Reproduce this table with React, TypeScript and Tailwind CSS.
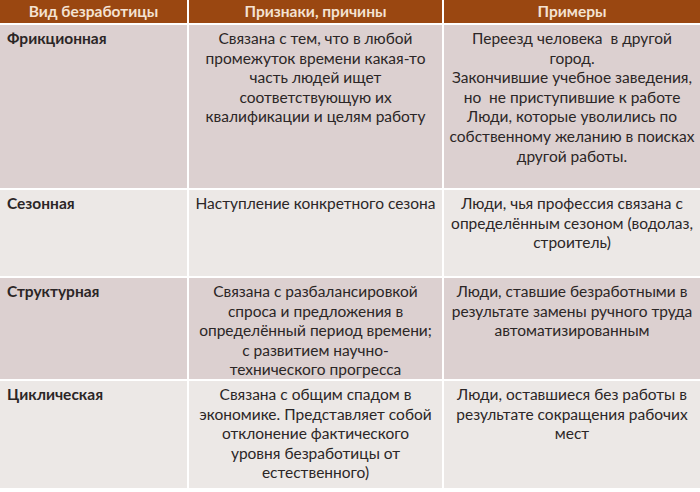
import React from 'react';

type Row = {
  kind: string;
  signs: string[];
  examples: string[];
  h: string;
  bg: string;
};

const rows: Row[] = [
  {
    kind: 'Фрикционная',
    signs: [
      'Связана с тем, что в любой',
      'промежуток времени какая-то',
      'часть людей ищет',
      'соответствующую их',
      'квалификации и целям работу',
    ],
    examples: [
      'Переезд человека  в другой',
      'город.',
      'Закончившие учебное заведения,',
      'но  не приступившие к работе',
      'Люди, которые уволились по',
      'собственному желанию в поисках',
      'другой работы.',
    ],
    h: 'h-[163px]',
    bg: 'bg-[#dcd0d0]',
  },
  {
    kind: 'Сезонная',
    signs: ['Наступление конкретного сезона'],
    examples: [
      'Люди, чья профессия связана с',
      'определённым сезоном (водолаз,',
      'строитель)',
    ],
    h: 'h-[86px]',
    bg: 'bg-[#ece8e6]',
  },
  {
    kind: 'Структурная',
    signs: [
      'Связана с разбалансировкой',
      'спроса и предложения в',
      'определённый период времени;',
      'с развитием научно-',
      'технического прогресса',
    ],
    examples: [
      'Люди, ставшие безработными в',
      'результате замены ручного труда',
      'автоматизированным',
    ],
    h: 'h-[101px]',
    bg: 'bg-[#dcd0d0]',
  },
  {
    kind: 'Циклическая',
    signs: [
      'Связана с общим спадом в',
      'экономике. Представляет собой',
      'отклонение фактического',
      'уровня безработицы от',
      'естественного)',
    ],
    examples: [
      'Люди, оставшиеся без работы в',
      'результате сокращения рабочих',
      'мест',
    ],
    h: 'h-[107px]',
    bg: 'bg-[#ece8e6]',
  },
];

const Lines = ({ items }: { items: string[] }) => (
  <>
    {items.map((t, i) => (
      <div key={i} className="whitespace-pre">
        {t}
      </div>
    ))}
  </>
);

export default function App() {
  return (
    <div
      className="w-[700px] h-[492px] bg-white text-[15.5px] leading-[19.6px] text-[#2b2626]"
      style={{ fontFamily: 'Lato, "Liberation Sans", sans-serif' }}
    >
      <div className="grid grid-cols-[187px_253px_1fr] gap-[2px] bg-white pb-[2px]">
        <div className="h-[23px] bg-[#9a4711] flex items-center justify-center font-bold text-[#f4e2d2]">
          Вид безработицы
        </div>
        <div className="h-[23px] bg-[#9a4711] flex items-center justify-center font-bold text-[#f4e2d2]">
          Признаки, причины
        </div>
        <div className="h-[23px] bg-[#9a4711] flex items-center justify-center font-bold text-[#f4e2d2]">
          Примеры
        </div>
        {rows.map((r) => (
          <React.Fragment key={r.kind}>
            <div className={`${r.h} ${r.bg} pl-[7px] pt-[4px] font-bold`}>{r.kind}</div>
            <div className={`${r.h} ${r.bg} pt-[4px] text-center`}>
              <Lines items={r.signs} />
            </div>
            <div className={`${r.h} ${r.bg} pt-[4px] text-center`}>
              <Lines items={r.examples} />
            </div>
          </React.Fragment>
        ))}
      </div>
    </div>
  );
}
